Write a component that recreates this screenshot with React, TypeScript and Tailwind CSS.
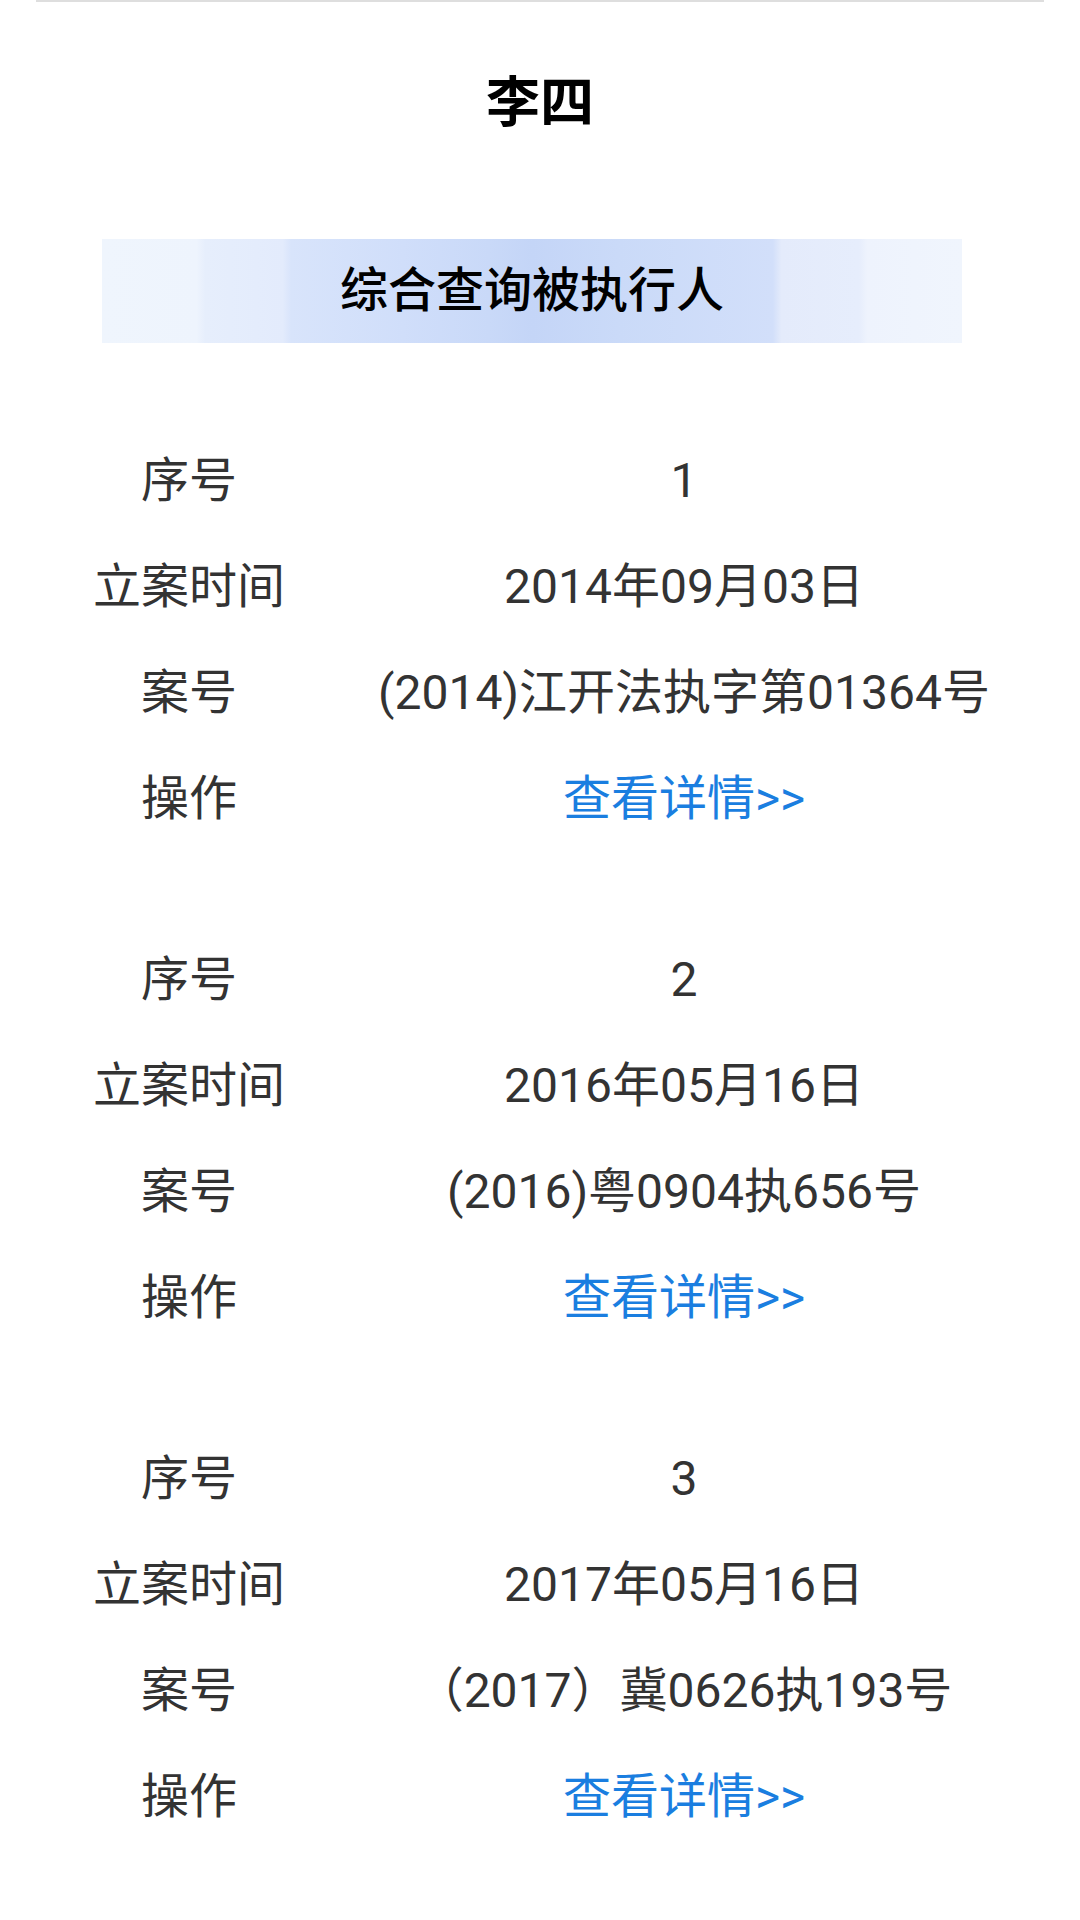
import React from "react";

type Record = {
  index: string;
  date: string;
  caseNo: string;
};

const records: Record[] = [
  { index: "1", date: "2014年09月03日", caseNo: "(2014)江开法执字第01364号" },
  { index: "2", date: "2016年05月16日", caseNo: "(2016)粤0904执656号" },
  { index: "3", date: "2017年05月16日", caseNo: "（2017）冀0626执193号" },
];

const font = { fontFamily: 'Roboto, "Noto Sans CJK SC", sans-serif' };

function Row({ label, children }: { label: string; children: React.ReactNode }) {
  return (
    <div className="grid h-[106px] grid-cols-[300px_690px] items-center text-[48px] text-[#333333]">
      <div className="text-center">{label}</div>
      <div className="text-center whitespace-nowrap">{children}</div>
    </div>
  );
}

export default function App(): React.JSX.Element {
  return (
    <div className="min-h-[1920px] w-[1080px] bg-white" style={font}>
      <div className="mx-[36px] h-[2px] bg-[#dedede]" />

      <h1 className="mt-[62px] text-center text-[54px] font-bold leading-[80px] text-black">李四</h1>

      <div className="ml-[102px] mt-[95px] flex h-[104px] w-[860px] items-center justify-center bg-[linear-gradient(90deg,#eff5fd_0%,#eef4fd_11%,#e6eefc_12%,#e3ebfc_21%,#d8e4fb_22%,#d0defa_35%,#c9d9f8_45%,#c4d5f7_50%,#cadaf8_60%,#d2dffa_78%,#e4ebfb_79%,#e6edfc_88%,#eef3fd_89%,#f0f5fd_100%)]">
        <span className="text-[48px] font-medium leading-none text-black">综合查询被执行人</span>
      </div>

      <div className="mt-[85px] flex flex-col gap-[75px] pl-[39px]">
        {records.map((r) => (
          <div key={r.index} className="flex flex-col">
            <Row label="序号">{r.index}</Row>
            <Row label="立案时间">{r.date}</Row>
            <Row label="案号">{r.caseNo}</Row>
            <Row label="操作">
              <a className="cursor-pointer text-[#1a7ee0]">查看详情&gt;&gt;</a>
            </Row>
          </div>
        ))}
      </div>
    </div>
  );
}
